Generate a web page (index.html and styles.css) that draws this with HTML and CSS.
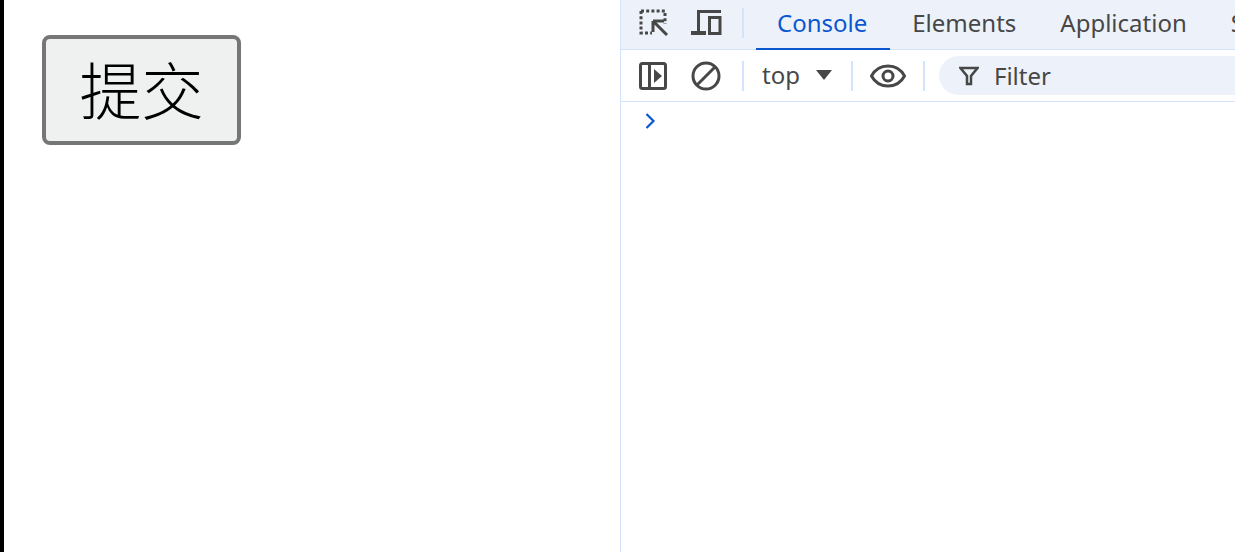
FILE: index.html
```html
<!DOCTYPE html>
<html lang="zh">
<head>
  <meta charset="UTF-8" />
  <title>提交</title>
  <link rel="stylesheet" href="styles.css">
</head>
<body>
  <div class="page">
    <button class="submit">提交</button>
  </div>
  <div class="devtools">
    <div class="tabbar">
      <span class="icon-btn first raised">
        <svg width="30" height="30" viewBox="0 0 30 30" class="icon">
          <path d="M2 3h24v13M2 3v22h11" fill="none" stroke="#474747" stroke-width="3" stroke-dasharray="3 2.200"/>
          <path d="M14 13h11M14 13v11M14 13l14 14" fill="none" stroke="#474747" stroke-width="3"/>
        </svg>
      </span>
      <span class="icon-btn device raised">
        <svg width="32" height="30" viewBox="0 0 32 30" class="icon">
          <path d="M30 3.500H7.500V24" fill="none" stroke="#474747" stroke-width="3"/>
          <path d="M0 25h15" fill="none" stroke="#474747" stroke-width="4"/>
          <rect x="18.500" y="9.500" width="10.500" height="16" fill="none" stroke="#474747" stroke-width="3"/>
        </svg>
      </span>
      <span class="divider tab-divider"></span>
      <span class="tab active">Console</span>
      <span class="tab">Elements</span>
      <span class="tab">Application</span>
      <span class="tab">Sources</span>
    </div>
    <div class="toolbar">
      <span class="icon-btn first">
        <svg width="30" height="30" viewBox="0 0 30 30" class="icon">
          <rect x="2.500" y="2.500" width="25" height="25" rx="2" fill="none" stroke="#474747" stroke-width="3"/>
          <path d="M11.500 3v24" stroke="#474747" stroke-width="3"/>
          <path d="M16 8v14l8-7z" fill="#474747"/>
        </svg>
      </span>
      <span class="icon-btn">
        <svg width="30" height="30" viewBox="0 0 30 30" class="icon">
          <circle cx="15" cy="15" r="13" fill="none" stroke="#474747" stroke-width="3"/>
          <path d="M6 24L24 6" stroke="#474747" stroke-width="3"/>
        </svg>
      </span>
      <span class="divider top-divider"></span>
      <span class="context">top</span>
      <svg width="16" height="10" viewBox="0 0 16 10" class="caret"><path d="M0 0h16l-8 10z" fill="#474747"/></svg>
      <span class="divider caret-divider"></span>
      <svg width="36" height="24" viewBox="0 0 36 24" class="eye">
        <path d="M1.500 12C5 5.500 11 2 18 2s13 3.500 16.500 10C31 18.500 25 22 18 22S5 18.500 1.500 12z" fill="none" stroke="#474747" stroke-width="3"/>
        <circle cx="18" cy="12" r="5" fill="none" stroke="#474747" stroke-width="3"/>
      </svg>
      <span class="divider eye-divider"></span>
      <div class="filter">
        <svg width="20" height="20" viewBox="0 0 20 20" class="funnel">
          <path d="M1.500 2h17l-6.500 8v8h-4v-8z" fill="none" stroke="#474747" stroke-width="2.500"/>
        </svg>
        <span class="filter-label">Filter</span>
      </div>
    </div>
    <div class="console">
      <svg width="12" height="18" viewBox="0 0 12 18"><path d="M2.500 2l7 7-7 7" fill="none" stroke="#0b57d0" stroke-width="2.200"/></svg>
    </div>
  </div>
</body>
</html>
```

FILE: styles.css
```css
html, body {
  height: 100%;
}
body {
  margin: 0;
  display: flex;
  overflow: hidden;
  background: #fff;
  font-family: "Noto Sans", "Open Sans", sans-serif;
}
.page {
  width: 620px;
  flex-shrink: 0;
  border-left: 4px solid #000;
  padding: 35px 0 0 38px;
  box-sizing: border-box;
}
.submit {
  width: 199px;
  height: 110px;
  padding: 0 0 4px;
  background: #eff0f0;
  border: 4px solid #767676;
  border-radius: 8px;
  color: #000;
  font-family: "Noto Sans CJK SC", sans-serif;
  font-size: 62px;
  font-weight: 300;
}
.devtools {
  flex: 1;
  min-width: 0;
  border-left: 1px solid #d3e3fd;
  overflow: hidden;
}
.tabbar {
  height: 49px;
  display: flex;
  align-items: flex-start;
  background: #edf2fa;
  border-bottom: 1px solid #d3e3fd;
  white-space: nowrap;
}
.toolbar {
  height: 51px;
  display: flex;
  align-items: center;
  border-bottom: 1px solid #d3e3fd;
  white-space: nowrap;
}
.icon-btn {
  display: flex;
  margin-left: 23px;
}
.icon-btn.first {
  margin-left: 17px;
}
.icon-btn.raised {
  margin-top: 8px;
}
.icon-btn.first.raised {
  margin-left: 18px;
}
.icon-btn.device {
  margin-left: 22px;
}
.divider {
  width: 2px;
  height: 30px;
  background: #d3e3fd;
  flex-shrink: 0;
}
.tab-divider {
  margin: 8px 12px 0 19px;
}
.tab {
  height: 50px;
  line-height: 45px;
  box-sizing: border-box;
  padding: 0 22px;
  font-size: 24px;
  color: #474747;
}
.tab.active {
  padding: 0 23px 0 21px;
  color: #0b57d0;
  border-bottom: 2px solid #0b57d0;
}
.top-divider {
  margin: 0 18px 0 21px;
}
.context {
  font-size: 24px;
  line-height: 48px;
  margin-bottom: 1px;
  color: #474747;
}
.caret {
  margin: 0 0 2px 16px;
}
.caret-divider {
  margin: 0 17px 0 19px;
}
.eye-divider {
  margin: 0 14px 0 17px;
}
.filter {
  flex: 1;
  height: 39px;
  display: flex;
  align-items: center;
  background: #edf2fa;
  border-radius: 20px 0 0 20px;
}
.funnel {
  margin-left: 20px;
}
.filter-label {
  margin-left: 15px;
  font-size: 24px;
  color: #474747;
}
.console {
  padding: 10px 0 0 23px;
}
```
